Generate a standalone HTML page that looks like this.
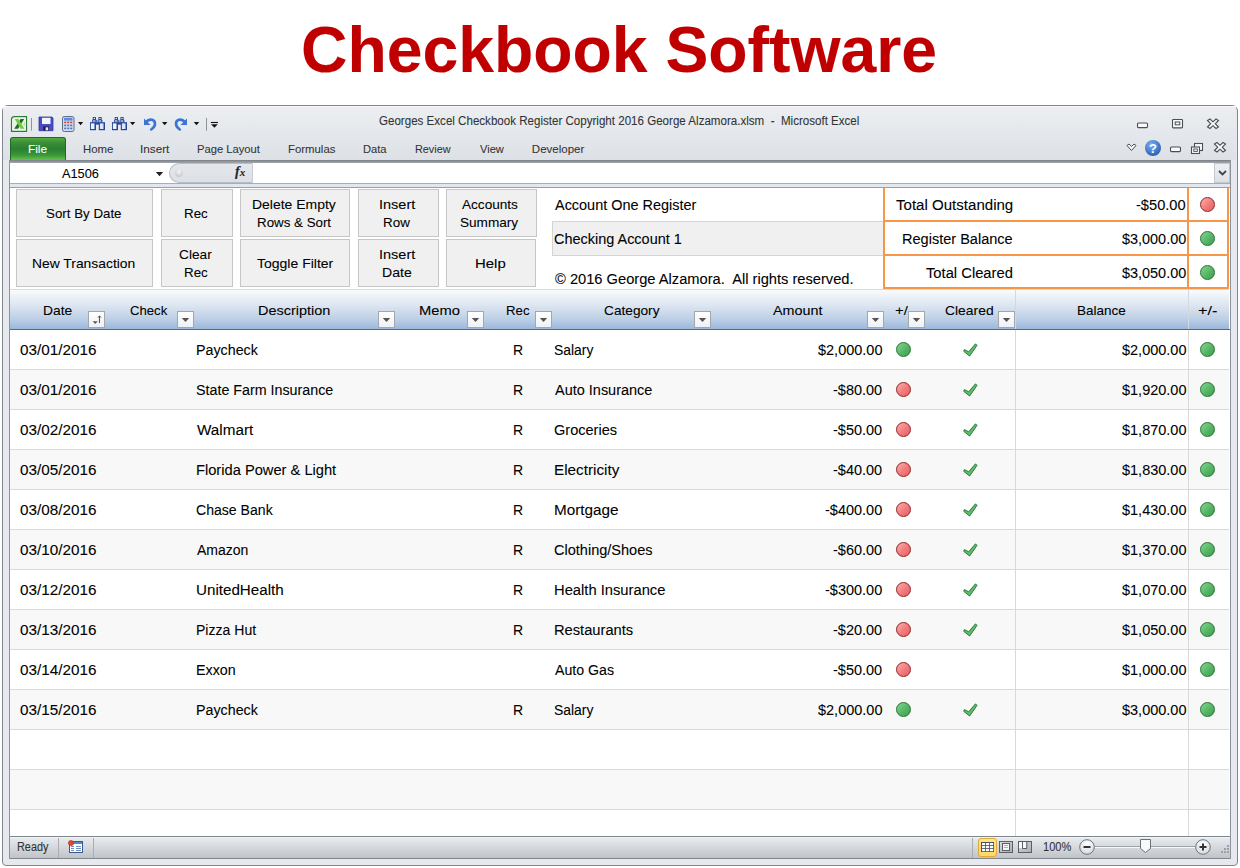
<!DOCTYPE html>
<html><head><meta charset="utf-8"><title>Checkbook Software</title>
<style>
html,body{margin:0;padding:0;background:#fff;font-family:"Liberation Sans",sans-serif;width:1240px;height:868px;overflow:hidden;position:relative;}
.t{position:absolute;white-space:pre;font-family:"Liberation Sans",sans-serif;transform-origin:0 0;-webkit-text-stroke:0.08px currentColor;}
.r{position:absolute;}
</style></head><body>
<svg width="0" height="0" style="position:absolute">
<defs>
<radialGradient id="zg" cx="50%" cy="30%" r="70%"><stop offset="0" stop-color="#ffffff"/><stop offset="1" stop-color="#d6dade"/></radialGradient>
<radialGradient id="hg" cx="40%" cy="30%" r="70%"><stop offset="0" stop-color="#7fb0f0"/><stop offset="1" stop-color="#2a60b8"/></radialGradient>
</defs></svg>
<div class="t" style="left:300.89px;top:17.50px;font-size:64px;line-height:64px;color:#c00000;font-weight:700;transform:scaleX(1.0046);">Checkbook Software</div>
<div class="r" style="left:2px;top:105px;width:1234px;height:759px;border:1px solid #7f868e;border-radius:6px 6px 4px 4px;background:#e6e9ed;"></div>
<div class="r" style="left:3px;top:106px;width:1233px;height:1px;background:#f7f8fa;border-radius:5px 5px 0 0;"></div>
<div class="r" style="left:3px;top:107px;width:1233px;height:53px;background:linear-gradient(#eceef1,#e5e8ec 45%,#dde1e6);"></div>
<div class="t" style="left:379.42px;top:114.60px;font-size:12px;line-height:12px;color:#333;transform:scaleX(0.9642);">Georges Excel Checkbook Register Copyright 2016 George Alzamora.xlsm  -  Microsoft Excel</div>
<div class="r" style="left:10px;top:137px;width:56px;height:23px;background:linear-gradient(#55aa40 0%,#3b9038 20%,#2b7f30 50%,#3a9838 78%,#66c34b 100%);border-radius:3px 3px 0 0;border:1px solid #22672a;border-bottom:none;box-sizing:border-box;"></div>
<div class="t" style="left:28.22px;top:144.25px;font-size:11.5px;line-height:11.5px;color:#fff;transform:scaleX(1.0292);">File</div>
<div class="t" style="left:82.66px;top:144.25px;font-size:11.5px;line-height:11.5px;color:#333;transform:scaleX(0.9897);">Home</div>
<div class="t" style="left:140.12px;top:144.25px;font-size:11.5px;line-height:11.5px;color:#333;transform:scaleX(1.0218);">Insert</div>
<div class="t" style="left:197.28px;top:144.25px;font-size:11.5px;line-height:11.5px;color:#333;transform:scaleX(0.9732);">Page Layout</div>
<div class="t" style="left:287.66px;top:144.25px;font-size:11.5px;line-height:11.5px;color:#333;transform:scaleX(0.9892);">Formulas</div>
<div class="t" style="left:363.08px;top:144.25px;font-size:11.5px;line-height:11.5px;color:#333;transform:scaleX(0.9700);">Data</div>
<div class="t" style="left:415.10px;top:144.25px;font-size:11.5px;line-height:11.5px;color:#333;transform:scaleX(0.9429);">Review</div>
<div class="t" style="left:479.96px;top:144.25px;font-size:11.5px;line-height:11.5px;color:#333;transform:scaleX(0.9634);">View</div>
<div class="t" style="left:531.85px;top:144.25px;font-size:11.5px;line-height:11.5px;color:#333;">Developer</div>
<div class="r" style="left:10px;top:160px;width:1221px;height:3px;background:linear-gradient(#7b8087,#a3a8ae);"></div>
<div class="r" style="left:10px;top:163px;width:1220px;height:20px;background:#fff;"></div>
<div class="r" style="left:10px;top:183px;width:1220px;height:1px;background:#a9aeb4;"></div>
<div class="r" style="left:10px;top:184px;width:1220px;height:3px;background:#e2e7ef;"></div>
<div class="r" style="left:9px;top:187px;width:1222px;height:1px;background:#9aa0a7;"></div>
<div class="t" style="left:62.45px;top:166.75px;font-size:13.5px;line-height:13.5px;color:#000;transform:scaleX(0.9453);">A1506</div>
<svg class="r" style="left:155px;top:171px" width="9" height="6"><path d="M0.8 1h7.4l-3.7 4.2z" fill="#222"/></svg>
<div class="r" style="left:169px;top:163px;width:84px;height:20px;background:linear-gradient(#e4e7eb,#dcdfe4);border:1px solid #b9bec4;border-right:1px solid #c9cdd2;border-radius:10px 0 0 10px;box-sizing:border-box;"></div>
<div class="r" style="left:175px;top:169px;width:8px;height:8px;border-radius:50%;background:radial-gradient(circle at 50% 30%,#f4f4f4,#b9bdc2);"></div>
<div class="t" style="left:235px;top:165px;font-family:'Liberation Serif',serif;font-style:italic;font-weight:700;font-size:14px;line-height:14px;color:#222;">f<span style="font-size:11px">x</span></div>
<div class="r" style="left:1214px;top:163px;width:16px;height:20px;background:linear-gradient(#eef0f3,#dde1e6);border:1px solid #c3c8ce;box-sizing:border-box;"></div>
<svg class="r" style="left:1218px;top:170px" width="9" height="6"><path d="M1 1l3.5 3.5L8 1" stroke="#444" stroke-width="1.8" fill="none"/></svg>
<div class="r" style="left:9px;top:188px;width:1222px;height:649px;background:#fff;border-left:1px solid #8b9299;border-right:1px solid #8b9299;box-sizing:border-box;"></div>
<div class="r" style="left:16px;top:189px;width:137px;height:48px;background:#f0f0f0;border:1px solid #c6c6c6;box-sizing:border-box;"></div>
<div class="r" style="left:161px;top:189px;width:72px;height:48px;background:#f0f0f0;border:1px solid #c6c6c6;box-sizing:border-box;"></div>
<div class="r" style="left:240px;top:189px;width:110px;height:48px;background:#f0f0f0;border:1px solid #c6c6c6;box-sizing:border-box;"></div>
<div class="r" style="left:358px;top:189px;width:81px;height:48px;background:#f0f0f0;border:1px solid #c6c6c6;box-sizing:border-box;"></div>
<div class="r" style="left:446px;top:189px;width:91px;height:48px;background:#f0f0f0;border:1px solid #c6c6c6;box-sizing:border-box;"></div>
<div class="r" style="left:16px;top:239px;width:137px;height:48px;background:#f0f0f0;border:1px solid #c6c6c6;box-sizing:border-box;"></div>
<div class="r" style="left:161px;top:239px;width:72px;height:48px;background:#f0f0f0;border:1px solid #c6c6c6;box-sizing:border-box;"></div>
<div class="r" style="left:240px;top:239px;width:110px;height:48px;background:#f0f0f0;border:1px solid #c6c6c6;box-sizing:border-box;"></div>
<div class="r" style="left:358px;top:239px;width:81px;height:48px;background:#f0f0f0;border:1px solid #c6c6c6;box-sizing:border-box;"></div>
<div class="r" style="left:446px;top:239px;width:90px;height:48px;background:#f0f0f0;border:1px solid #c6c6c6;box-sizing:border-box;"></div>
<div class="t" style="left:46.39px;top:207.30px;font-size:13px;line-height:13px;color:#000;transform:scaleX(1.0248);">Sort By Date</div>
<div class="t" style="left:183.87px;top:207.30px;font-size:13px;line-height:13px;color:#000;transform:scaleX(1.0276);">Rec</div>
<div class="t" style="left:252.02px;top:198.20px;font-size:13px;line-height:13px;color:#000;transform:scaleX(1.0741);">Delete Empty</div>
<div class="t" style="left:257.27px;top:216.00px;font-size:13px;line-height:13px;color:#000;transform:scaleX(1.0254);">Rows &amp; Sort</div>
<div class="t" style="left:379.16px;top:198.20px;font-size:13px;line-height:13px;color:#000;transform:scaleX(1.1154);">Insert</div>
<div class="t" style="left:383.16px;top:216.00px;font-size:13px;line-height:13px;color:#000;transform:scaleX(1.0321);">Row</div>
<div class="t" style="left:462.30px;top:198.20px;font-size:13px;line-height:13px;color:#000;transform:scaleX(1.0453);">Accounts</div>
<div class="t" style="left:460.37px;top:216.00px;font-size:13px;line-height:13px;color:#000;transform:scaleX(1.0455);">Summary</div>
<div class="t" style="left:32.13px;top:257.30px;font-size:13px;line-height:13px;color:#000;transform:scaleX(1.0664);">New Transaction</div>
<div class="t" style="left:179.26px;top:248.00px;font-size:13px;line-height:13px;color:#000;transform:scaleX(1.0532);">Clear</div>
<div class="t" style="left:183.87px;top:265.80px;font-size:13px;line-height:13px;color:#000;transform:scaleX(1.0276);">Rec</div>
<div class="t" style="left:256.68px;top:256.70px;font-size:13px;line-height:13px;color:#000;transform:scaleX(1.0768);">Toggle Filter</div>
<div class="t" style="left:379.16px;top:247.70px;font-size:13px;line-height:13px;color:#000;transform:scaleX(1.1154);">Insert</div>
<div class="t" style="left:382.31px;top:265.80px;font-size:13px;line-height:13px;color:#000;transform:scaleX(1.0814);">Date</div>
<div class="t" style="left:474.74px;top:256.70px;font-size:13px;line-height:13px;color:#000;transform:scaleX(1.1474);">Help</div>
<div class="t" style="left:555.00px;top:198.00px;font-size:14px;line-height:14px;color:#000;transform:scaleX(1.0315);">Account One Register</div>
<div class="r" style="left:552px;top:221px;width:332px;height:35px;background:#f0f0f0;border:1px solid #d4d4d4;border-right:none;box-sizing:border-box;"></div>
<div class="t" style="left:554.28px;top:231.90px;font-size:14px;line-height:14px;color:#000;transform:scaleX(1.0327);">Checking Account 1</div>
<div class="t" style="left:554.79px;top:271.70px;font-size:14px;line-height:14px;color:#000;transform:scaleX(1.0476);">© 2016 George Alzamora.  All rights reserved.</div>
<div class="r" style="left:883px;top:188px;width:346px;height:101px;border:2px solid #f79646;border-top:none;box-sizing:border-box;"></div>
<div class="r" style="left:883px;top:220px;width:346px;height:2px;background:#f79646;"></div>
<div class="r" style="left:883px;top:254px;width:346px;height:2px;background:#f79646;"></div>
<div class="r" style="left:1187px;top:188px;width:2px;height:101px;background:#f79646;"></div>
<div class="t" style="left:895.98px;top:197.80px;font-size:14px;line-height:14px;color:#000;transform:scaleX(1.0761);">Total Outstanding</div>
<div class="t" style="left:902.26px;top:232.00px;font-size:14px;line-height:14px;color:#000;transform:scaleX(1.0381);">Register Balance</div>
<div class="t" style="left:926.38px;top:265.90px;font-size:14px;line-height:14px;color:#000;transform:scaleX(1.0529);">Total Cleared</div>
<div class="t" style="left:1136.37px;top:197.80px;font-size:14px;line-height:14px;color:#000;transform:scaleX(1.0454);">-$50.00</div>
<div class="t" style="left:1121.79px;top:232.00px;font-size:14px;line-height:14px;color:#000;transform:scaleX(1.0309);">$3,000.00</div>
<div class="t" style="left:1121.79px;top:265.90px;font-size:14px;line-height:14px;color:#000;transform:scaleX(1.0309);">$3,050.00</div>
<div class="r" style="left:1200px;top:197px;width:15px;height:15px;border-radius:50%;background:linear-gradient(135deg,#fbb0b0,#f27a7a 55%,#ec5f5f);border:1px solid #8c2424;box-sizing:border-box;"></div>
<div class="r" style="left:1200px;top:231px;width:15px;height:15px;border-radius:50%;background:linear-gradient(135deg,#86d491,#55b766 55%,#3e9f4f);border:1px solid #2a6e33;box-sizing:border-box;"></div>
<div class="r" style="left:1200px;top:265px;width:15px;height:15px;border-radius:50%;background:linear-gradient(135deg,#86d491,#55b766 55%,#3e9f4f);border:1px solid #2a6e33;box-sizing:border-box;"></div>
<div class="r" style="left:10px;top:289px;width:1219px;height:1px;background:#dadada;"></div>
<div class="r" style="left:10px;top:290px;width:1219px;height:39px;background:linear-gradient(#f9fbfd 0%,#d8e2ef 45%,#bccfe6 75%,#9bb8dc 100%);"></div>
<div class="r" style="left:10px;top:329px;width:1221px;height:1px;background:#62676d;"></div>
<div class="r" style="left:1015px;top:290px;width:1px;height:39px;background:#d0d8e2;"></div>
<div class="r" style="left:1188px;top:290px;width:1px;height:39px;background:#d0d8e2;"></div>
<div class="t" style="left:42.53px;top:304.10px;font-size:13px;line-height:13px;color:#000;transform:scaleX(1.0620);">Date</div>
<div class="t" style="left:130.49px;top:304.10px;font-size:13px;line-height:13px;color:#000;transform:scaleX(1.0111);">Check</div>
<div class="t" style="left:257.98px;top:304.10px;font-size:13px;line-height:13px;color:#000;transform:scaleX(1.1125);">Description</div>
<div class="t" style="left:419.15px;top:304.10px;font-size:13px;line-height:13px;color:#000;transform:scaleX(1.1333);">Memo</div>
<div class="t" style="left:506.08px;top:304.10px;font-size:13px;line-height:13px;color:#000;transform:scaleX(1.0184);">Rec</div>
<div class="t" style="left:603.56px;top:304.10px;font-size:13px;line-height:13px;color:#000;transform:scaleX(1.0519);">Category</div>
<div class="t" style="left:773.20px;top:304.10px;font-size:13px;line-height:13px;color:#000;transform:scaleX(1.1029);">Amount</div>
<div class="t" style="left:894.62px;top:304.10px;font-size:13px;line-height:13px;color:#000;transform:scaleX(1.1415);">+/</div>
<div class="t" style="left:945.45px;top:304.10px;font-size:13px;line-height:13px;color:#000;transform:scaleX(1.0682);">Cleared</div>
<div class="t" style="left:1077.16px;top:304.10px;font-size:13px;line-height:13px;color:#000;transform:scaleX(1.0397);">Balance</div>
<div class="t" style="left:1198.05px;top:304.10px;font-size:13px;line-height:13px;color:#000;transform:scaleX(1.2500);">+/-</div>
<div class="r" style="left:88px;top:311px;width:17px;height:17px;background:linear-gradient(#fff,#eef1f5);border:1px solid #a3a7ac;box-sizing:border-box;"></div><svg class="r" style="left:88px;top:311px" width="17" height="17"><path d="M4.7 10.3h5l-2.5 2.8z" fill="#555"/><path d="M11.5 5v7" stroke="#555" stroke-width="1.1"/><path d="M10 6.6l1.5-1.8 1.5 1.8" stroke="#555" stroke-width="1" fill="none"/></svg>
<div class="r" style="left:177px;top:311px;width:17px;height:17px;background:linear-gradient(#fff,#eef1f5);border:1px solid #a3a7ac;box-sizing:border-box;"></div><svg class="r" style="left:177px;top:311px" width="17" height="17"><path d="M4.8 7h7.4l-3.7 4z" fill="#555"/></svg>
<div class="r" style="left:378px;top:311px;width:17px;height:17px;background:linear-gradient(#fff,#eef1f5);border:1px solid #a3a7ac;box-sizing:border-box;"></div><svg class="r" style="left:378px;top:311px" width="17" height="17"><path d="M4.8 7h7.4l-3.7 4z" fill="#555"/></svg>
<div class="r" style="left:467px;top:311px;width:17px;height:17px;background:linear-gradient(#fff,#eef1f5);border:1px solid #a3a7ac;box-sizing:border-box;"></div><svg class="r" style="left:467px;top:311px" width="17" height="17"><path d="M4.8 7h7.4l-3.7 4z" fill="#555"/></svg>
<div class="r" style="left:535px;top:311px;width:17px;height:17px;background:linear-gradient(#fff,#eef1f5);border:1px solid #a3a7ac;box-sizing:border-box;"></div><svg class="r" style="left:535px;top:311px" width="17" height="17"><path d="M4.8 7h7.4l-3.7 4z" fill="#555"/></svg>
<div class="r" style="left:694px;top:311px;width:17px;height:17px;background:linear-gradient(#fff,#eef1f5);border:1px solid #a3a7ac;box-sizing:border-box;"></div><svg class="r" style="left:694px;top:311px" width="17" height="17"><path d="M4.8 7h7.4l-3.7 4z" fill="#555"/></svg>
<div class="r" style="left:867px;top:311px;width:17px;height:17px;background:linear-gradient(#fff,#eef1f5);border:1px solid #a3a7ac;box-sizing:border-box;"></div><svg class="r" style="left:867px;top:311px" width="17" height="17"><path d="M4.8 7h7.4l-3.7 4z" fill="#555"/></svg>
<div class="r" style="left:908px;top:311px;width:17px;height:17px;background:linear-gradient(#fff,#eef1f5);border:1px solid #a3a7ac;box-sizing:border-box;"></div><svg class="r" style="left:908px;top:311px" width="17" height="17"><path d="M4.8 7h7.4l-3.7 4z" fill="#555"/></svg>
<div class="r" style="left:998px;top:311px;width:17px;height:17px;background:linear-gradient(#fff,#eef1f5);border:1px solid #a3a7ac;box-sizing:border-box;"></div><svg class="r" style="left:998px;top:311px" width="17" height="17"><path d="M4.8 7h7.4l-3.7 4z" fill="#555"/></svg>
<div class="r" style="left:10px;top:330px;width:1219px;height:39px;background:#ffffff;"></div>
<div class="r" style="left:10px;top:369px;width:1219px;height:1px;background:#dadada;"></div>
<div class="r" style="left:10px;top:370px;width:1219px;height:39px;background:#f8f8f8;"></div>
<div class="r" style="left:10px;top:409px;width:1219px;height:1px;background:#dadada;"></div>
<div class="r" style="left:10px;top:410px;width:1219px;height:39px;background:#ffffff;"></div>
<div class="r" style="left:10px;top:449px;width:1219px;height:1px;background:#dadada;"></div>
<div class="r" style="left:10px;top:450px;width:1219px;height:39px;background:#f8f8f8;"></div>
<div class="r" style="left:10px;top:489px;width:1219px;height:1px;background:#dadada;"></div>
<div class="r" style="left:10px;top:490px;width:1219px;height:39px;background:#ffffff;"></div>
<div class="r" style="left:10px;top:529px;width:1219px;height:1px;background:#dadada;"></div>
<div class="r" style="left:10px;top:530px;width:1219px;height:39px;background:#f8f8f8;"></div>
<div class="r" style="left:10px;top:569px;width:1219px;height:1px;background:#dadada;"></div>
<div class="r" style="left:10px;top:570px;width:1219px;height:39px;background:#ffffff;"></div>
<div class="r" style="left:10px;top:609px;width:1219px;height:1px;background:#dadada;"></div>
<div class="r" style="left:10px;top:610px;width:1219px;height:39px;background:#f8f8f8;"></div>
<div class="r" style="left:10px;top:649px;width:1219px;height:1px;background:#dadada;"></div>
<div class="r" style="left:10px;top:650px;width:1219px;height:39px;background:#ffffff;"></div>
<div class="r" style="left:10px;top:689px;width:1219px;height:1px;background:#dadada;"></div>
<div class="r" style="left:10px;top:690px;width:1219px;height:39px;background:#f8f8f8;"></div>
<div class="r" style="left:10px;top:729px;width:1219px;height:1px;background:#dadada;"></div>
<div class="r" style="left:10px;top:730px;width:1219px;height:39px;background:#ffffff;"></div>
<div class="r" style="left:10px;top:769px;width:1219px;height:1px;background:#dadada;"></div>
<div class="r" style="left:10px;top:770px;width:1219px;height:39px;background:#f8f8f8;"></div>
<div class="r" style="left:10px;top:809px;width:1219px;height:1px;background:#dadada;"></div>
<div class="r" style="left:10px;top:810px;width:1219px;height:26px;background:#ffffff;"></div>
<div class="r" style="left:1015px;top:330px;width:1px;height:506px;background:#d9d9d9;"></div>
<div class="r" style="left:1188px;top:330px;width:1px;height:506px;background:#d9d9d9;"></div>
<div class="t" style="left:19.65px;top:343.20px;font-size:14px;line-height:14px;color:#000;transform:scaleX(1.0913);">03/01/2016</div>
<div class="t" style="left:195.88px;top:343.20px;font-size:14px;line-height:14px;color:#000;transform:scaleX(1.0185);">Paycheck</div>
<div class="t" style="left:512.90px;top:343.20px;font-size:14px;line-height:14px;color:#000;">R</div>
<div class="t" style="left:554.41px;top:343.20px;font-size:14px;line-height:14px;color:#000;transform:scaleX(0.9923);">Salary</div>
<div class="t" style="left:818.14px;top:343.20px;font-size:14px;line-height:14px;color:#000;transform:scaleX(1.0350);">$2,000.00</div>
<div class="r" style="left:896px;top:342px;width:15px;height:15px;border-radius:50%;background:linear-gradient(135deg,#86d491,#55b766 55%,#3e9f4f);border:1px solid #2a6e33;box-sizing:border-box;"></div>
<svg class="r" style="left:962px;top:342px" width="17" height="16" viewBox="0 0 17 16"><path d="M2.4 7.6L1.7 9.3L7.6 14L15 3.4L13.5 1.8L6.7 9.8Z" fill="#5cbf6e" stroke="#2c7a38" stroke-width="1" stroke-linejoin="round"/></svg>
<div class="t" style="left:1121.54px;top:343.20px;font-size:14px;line-height:14px;color:#000;transform:scaleX(1.0350);">$2,000.00</div>
<div class="r" style="left:1200px;top:342px;width:15px;height:15px;border-radius:50%;background:linear-gradient(135deg,#86d491,#55b766 55%,#3e9f4f);border:1px solid #2a6e33;box-sizing:border-box;"></div>
<div class="t" style="left:19.65px;top:383.20px;font-size:14px;line-height:14px;color:#000;transform:scaleX(1.0913);">03/01/2016</div>
<div class="t" style="left:196.29px;top:383.20px;font-size:14px;line-height:14px;color:#000;transform:scaleX(1.0195);">State Farm Insurance</div>
<div class="t" style="left:512.90px;top:383.20px;font-size:14px;line-height:14px;color:#000;">R</div>
<div class="t" style="left:555.10px;top:383.20px;font-size:14px;line-height:14px;color:#000;transform:scaleX(1.0342);">Auto Insurance</div>
<div class="t" style="left:833.46px;top:383.20px;font-size:14px;line-height:14px;color:#000;transform:scaleX(1.0350);">-$80.00</div>
<div class="r" style="left:896px;top:382px;width:15px;height:15px;border-radius:50%;background:linear-gradient(135deg,#fbb0b0,#f27a7a 55%,#ec5f5f);border:1px solid #8c2424;box-sizing:border-box;"></div>
<svg class="r" style="left:962px;top:382px" width="17" height="16" viewBox="0 0 17 16"><path d="M2.4 7.6L1.7 9.3L7.6 14L15 3.4L13.5 1.8L6.7 9.8Z" fill="#5cbf6e" stroke="#2c7a38" stroke-width="1" stroke-linejoin="round"/></svg>
<div class="t" style="left:1121.54px;top:383.20px;font-size:14px;line-height:14px;color:#000;transform:scaleX(1.0350);">$1,920.00</div>
<div class="r" style="left:1200px;top:382px;width:15px;height:15px;border-radius:50%;background:linear-gradient(135deg,#86d491,#55b766 55%,#3e9f4f);border:1px solid #2a6e33;box-sizing:border-box;"></div>
<div class="t" style="left:19.65px;top:423.20px;font-size:14px;line-height:14px;color:#000;transform:scaleX(1.0913);">03/02/2016</div>
<div class="t" style="left:196.89px;top:423.20px;font-size:14px;line-height:14px;color:#000;transform:scaleX(1.0895);">Walmart</div>
<div class="t" style="left:512.90px;top:423.20px;font-size:14px;line-height:14px;color:#000;">R</div>
<div class="t" style="left:554.37px;top:423.20px;font-size:14px;line-height:14px;color:#000;transform:scaleX(1.0387);">Groceries</div>
<div class="t" style="left:833.46px;top:423.20px;font-size:14px;line-height:14px;color:#000;transform:scaleX(1.0350);">-$50.00</div>
<div class="r" style="left:896px;top:422px;width:15px;height:15px;border-radius:50%;background:linear-gradient(135deg,#fbb0b0,#f27a7a 55%,#ec5f5f);border:1px solid #8c2424;box-sizing:border-box;"></div>
<svg class="r" style="left:962px;top:422px" width="17" height="16" viewBox="0 0 17 16"><path d="M2.4 7.6L1.7 9.3L7.6 14L15 3.4L13.5 1.8L6.7 9.8Z" fill="#5cbf6e" stroke="#2c7a38" stroke-width="1" stroke-linejoin="round"/></svg>
<div class="t" style="left:1121.54px;top:423.20px;font-size:14px;line-height:14px;color:#000;transform:scaleX(1.0350);">$1,870.00</div>
<div class="r" style="left:1200px;top:422px;width:15px;height:15px;border-radius:50%;background:linear-gradient(135deg,#86d491,#55b766 55%,#3e9f4f);border:1px solid #2a6e33;box-sizing:border-box;"></div>
<div class="t" style="left:19.65px;top:463.20px;font-size:14px;line-height:14px;color:#000;transform:scaleX(1.0913);">03/05/2016</div>
<div class="t" style="left:195.85px;top:463.20px;font-size:14px;line-height:14px;color:#000;transform:scaleX(1.0475);">Florida Power &amp; Light</div>
<div class="t" style="left:512.90px;top:463.20px;font-size:14px;line-height:14px;color:#000;">R</div>
<div class="t" style="left:553.90px;top:463.20px;font-size:14px;line-height:14px;color:#000;transform:scaleX(1.0901);">Electricity</div>
<div class="t" style="left:833.46px;top:463.20px;font-size:14px;line-height:14px;color:#000;transform:scaleX(1.0350);">-$40.00</div>
<div class="r" style="left:896px;top:462px;width:15px;height:15px;border-radius:50%;background:linear-gradient(135deg,#fbb0b0,#f27a7a 55%,#ec5f5f);border:1px solid #8c2424;box-sizing:border-box;"></div>
<svg class="r" style="left:962px;top:462px" width="17" height="16" viewBox="0 0 17 16"><path d="M2.4 7.6L1.7 9.3L7.6 14L15 3.4L13.5 1.8L6.7 9.8Z" fill="#5cbf6e" stroke="#2c7a38" stroke-width="1" stroke-linejoin="round"/></svg>
<div class="t" style="left:1121.54px;top:463.20px;font-size:14px;line-height:14px;color:#000;transform:scaleX(1.0350);">$1,830.00</div>
<div class="r" style="left:1200px;top:462px;width:15px;height:15px;border-radius:50%;background:linear-gradient(135deg,#86d491,#55b766 55%,#3e9f4f);border:1px solid #2a6e33;box-sizing:border-box;"></div>
<div class="t" style="left:19.65px;top:503.20px;font-size:14px;line-height:14px;color:#000;transform:scaleX(1.0913);">03/08/2016</div>
<div class="t" style="left:196.30px;top:503.20px;font-size:14px;line-height:14px;color:#000;transform:scaleX(1.0053);">Chase Bank</div>
<div class="t" style="left:512.90px;top:503.20px;font-size:14px;line-height:14px;color:#000;">R</div>
<div class="t" style="left:553.90px;top:503.20px;font-size:14px;line-height:14px;color:#000;transform:scaleX(1.0904);">Mortgage</div>
<div class="t" style="left:825.39px;top:503.20px;font-size:14px;line-height:14px;color:#000;transform:scaleX(1.0350);">-$400.00</div>
<div class="r" style="left:896px;top:502px;width:15px;height:15px;border-radius:50%;background:linear-gradient(135deg,#fbb0b0,#f27a7a 55%,#ec5f5f);border:1px solid #8c2424;box-sizing:border-box;"></div>
<svg class="r" style="left:962px;top:502px" width="17" height="16" viewBox="0 0 17 16"><path d="M2.4 7.6L1.7 9.3L7.6 14L15 3.4L13.5 1.8L6.7 9.8Z" fill="#5cbf6e" stroke="#2c7a38" stroke-width="1" stroke-linejoin="round"/></svg>
<div class="t" style="left:1121.54px;top:503.20px;font-size:14px;line-height:14px;color:#000;transform:scaleX(1.0350);">$1,430.00</div>
<div class="r" style="left:1200px;top:502px;width:15px;height:15px;border-radius:50%;background:linear-gradient(135deg,#86d491,#55b766 55%,#3e9f4f);border:1px solid #2a6e33;box-sizing:border-box;"></div>
<div class="t" style="left:19.65px;top:543.20px;font-size:14px;line-height:14px;color:#000;transform:scaleX(1.0913);">03/10/2016</div>
<div class="t" style="left:197.00px;top:543.20px;font-size:14px;line-height:14px;color:#000;">Amazon</div>
<div class="t" style="left:512.90px;top:543.20px;font-size:14px;line-height:14px;color:#000;">R</div>
<div class="t" style="left:554.37px;top:543.20px;font-size:14px;line-height:14px;color:#000;transform:scaleX(1.0373);">Clothing/Shoes</div>
<div class="t" style="left:833.46px;top:543.20px;font-size:14px;line-height:14px;color:#000;transform:scaleX(1.0350);">-$60.00</div>
<div class="r" style="left:896px;top:542px;width:15px;height:15px;border-radius:50%;background:linear-gradient(135deg,#fbb0b0,#f27a7a 55%,#ec5f5f);border:1px solid #8c2424;box-sizing:border-box;"></div>
<svg class="r" style="left:962px;top:542px" width="17" height="16" viewBox="0 0 17 16"><path d="M2.4 7.6L1.7 9.3L7.6 14L15 3.4L13.5 1.8L6.7 9.8Z" fill="#5cbf6e" stroke="#2c7a38" stroke-width="1" stroke-linejoin="round"/></svg>
<div class="t" style="left:1121.54px;top:543.20px;font-size:14px;line-height:14px;color:#000;transform:scaleX(1.0350);">$1,370.00</div>
<div class="r" style="left:1200px;top:542px;width:15px;height:15px;border-radius:50%;background:linear-gradient(135deg,#86d491,#55b766 55%,#3e9f4f);border:1px solid #2a6e33;box-sizing:border-box;"></div>
<div class="t" style="left:19.65px;top:583.20px;font-size:14px;line-height:14px;color:#000;transform:scaleX(1.0913);">03/12/2016</div>
<div class="t" style="left:195.81px;top:583.20px;font-size:14px;line-height:14px;color:#000;transform:scaleX(1.0835);">UnitedHealth</div>
<div class="t" style="left:512.90px;top:583.20px;font-size:14px;line-height:14px;color:#000;">R</div>
<div class="t" style="left:553.94px;top:583.20px;font-size:14px;line-height:14px;color:#000;transform:scaleX(1.0528);">Health Insurance</div>
<div class="t" style="left:825.39px;top:583.20px;font-size:14px;line-height:14px;color:#000;transform:scaleX(1.0350);">-$300.00</div>
<div class="r" style="left:896px;top:582px;width:15px;height:15px;border-radius:50%;background:linear-gradient(135deg,#fbb0b0,#f27a7a 55%,#ec5f5f);border:1px solid #8c2424;box-sizing:border-box;"></div>
<svg class="r" style="left:962px;top:582px" width="17" height="16" viewBox="0 0 17 16"><path d="M2.4 7.6L1.7 9.3L7.6 14L15 3.4L13.5 1.8L6.7 9.8Z" fill="#5cbf6e" stroke="#2c7a38" stroke-width="1" stroke-linejoin="round"/></svg>
<div class="t" style="left:1121.54px;top:583.20px;font-size:14px;line-height:14px;color:#000;transform:scaleX(1.0350);">$1,070.00</div>
<div class="r" style="left:1200px;top:582px;width:15px;height:15px;border-radius:50%;background:linear-gradient(135deg,#86d491,#55b766 55%,#3e9f4f);border:1px solid #2a6e33;box-sizing:border-box;"></div>
<div class="t" style="left:19.65px;top:623.20px;font-size:14px;line-height:14px;color:#000;transform:scaleX(1.0913);">03/13/2016</div>
<div class="t" style="left:195.90px;top:623.20px;font-size:14px;line-height:14px;color:#000;transform:scaleX(1.0034);">Pizza Hut</div>
<div class="t" style="left:512.90px;top:623.20px;font-size:14px;line-height:14px;color:#000;">R</div>
<div class="t" style="left:553.95px;top:623.20px;font-size:14px;line-height:14px;color:#000;transform:scaleX(1.0487);">Restaurants</div>
<div class="t" style="left:833.46px;top:623.20px;font-size:14px;line-height:14px;color:#000;transform:scaleX(1.0350);">-$20.00</div>
<div class="r" style="left:896px;top:622px;width:15px;height:15px;border-radius:50%;background:linear-gradient(135deg,#fbb0b0,#f27a7a 55%,#ec5f5f);border:1px solid #8c2424;box-sizing:border-box;"></div>
<svg class="r" style="left:962px;top:622px" width="17" height="16" viewBox="0 0 17 16"><path d="M2.4 7.6L1.7 9.3L7.6 14L15 3.4L13.5 1.8L6.7 9.8Z" fill="#5cbf6e" stroke="#2c7a38" stroke-width="1" stroke-linejoin="round"/></svg>
<div class="t" style="left:1121.54px;top:623.20px;font-size:14px;line-height:14px;color:#000;transform:scaleX(1.0350);">$1,050.00</div>
<div class="r" style="left:1200px;top:622px;width:15px;height:15px;border-radius:50%;background:linear-gradient(135deg,#86d491,#55b766 55%,#3e9f4f);border:1px solid #2a6e33;box-sizing:border-box;"></div>
<div class="t" style="left:19.65px;top:663.20px;font-size:14px;line-height:14px;color:#000;transform:scaleX(1.0913);">03/14/2016</div>
<div class="t" style="left:195.88px;top:663.20px;font-size:14px;line-height:14px;color:#000;transform:scaleX(1.0217);">Exxon</div>
<div class="t" style="left:555.10px;top:663.20px;font-size:14px;line-height:14px;color:#000;transform:scaleX(1.0121);">Auto Gas</div>
<div class="t" style="left:833.46px;top:663.20px;font-size:14px;line-height:14px;color:#000;transform:scaleX(1.0350);">-$50.00</div>
<div class="r" style="left:896px;top:662px;width:15px;height:15px;border-radius:50%;background:linear-gradient(135deg,#fbb0b0,#f27a7a 55%,#ec5f5f);border:1px solid #8c2424;box-sizing:border-box;"></div>
<div class="t" style="left:1121.54px;top:663.20px;font-size:14px;line-height:14px;color:#000;transform:scaleX(1.0350);">$1,000.00</div>
<div class="r" style="left:1200px;top:662px;width:15px;height:15px;border-radius:50%;background:linear-gradient(135deg,#86d491,#55b766 55%,#3e9f4f);border:1px solid #2a6e33;box-sizing:border-box;"></div>
<div class="t" style="left:19.65px;top:703.20px;font-size:14px;line-height:14px;color:#000;transform:scaleX(1.0913);">03/15/2016</div>
<div class="t" style="left:195.88px;top:703.20px;font-size:14px;line-height:14px;color:#000;transform:scaleX(1.0185);">Paycheck</div>
<div class="t" style="left:512.90px;top:703.20px;font-size:14px;line-height:14px;color:#000;">R</div>
<div class="t" style="left:554.41px;top:703.20px;font-size:14px;line-height:14px;color:#000;transform:scaleX(0.9923);">Salary</div>
<div class="t" style="left:818.14px;top:703.20px;font-size:14px;line-height:14px;color:#000;transform:scaleX(1.0350);">$2,000.00</div>
<div class="r" style="left:896px;top:702px;width:15px;height:15px;border-radius:50%;background:linear-gradient(135deg,#86d491,#55b766 55%,#3e9f4f);border:1px solid #2a6e33;box-sizing:border-box;"></div>
<svg class="r" style="left:962px;top:702px" width="17" height="16" viewBox="0 0 17 16"><path d="M2.4 7.6L1.7 9.3L7.6 14L15 3.4L13.5 1.8L6.7 9.8Z" fill="#5cbf6e" stroke="#2c7a38" stroke-width="1" stroke-linejoin="round"/></svg>
<div class="t" style="left:1121.54px;top:703.20px;font-size:14px;line-height:14px;color:#000;transform:scaleX(1.0350);">$3,000.00</div>
<div class="r" style="left:1200px;top:702px;width:15px;height:15px;border-radius:50%;background:linear-gradient(135deg,#86d491,#55b766 55%,#3e9f4f);border:1px solid #2a6e33;box-sizing:border-box;"></div>
<div class="r" style="left:10px;top:836px;width:1220px;height:1px;background:#7f858c;"></div>
<div class="r" style="left:10px;top:837px;width:1220px;height:21px;background:linear-gradient(#f6f8fa 0,#e6e9ec 8%,#d3d6da 55%,#c0c4c9 100%);"></div>
<div class="r" style="left:10px;top:858px;width:1220px;height:1px;background:#80868d;"></div>
<div class="t" style="left:17.49px;top:840.80px;font-size:12px;line-height:12px;color:#333;transform:scaleX(0.9050);">Ready</div>
<div class="r" style="left:58px;top:838px;width:1px;height:20px;background:#a9aeb4;"></div>
<div class="r" style="left:93px;top:838px;width:1px;height:20px;background:#a9aeb4;"></div>
<div class="r" style="left:972px;top:838px;width:1px;height:20px;background:#a9aeb4;"></div>
<div class="r" style="left:9px;top:160px;width:1px;height:699px;background:#8b9299;"></div>
<div class="r" style="left:1230px;top:160px;width:1px;height:699px;background:#8b9299;"></div>
<svg class="r" style="left:67px;top:839px" width="17" height="15" viewBox="0 0 17 15">
<rect x="2.5" y="2.5" width="13" height="11" fill="#fff" stroke="#3a5a8c"/>
<rect x="3" y="3" width="12" height="2" fill="#5b86c8"/>
<path d="M4 7.5h3M9 7.5h5M4 9.5h3M9 9.5h5M4 11.5h3M9 11.5h5" stroke="#6d8fc4" stroke-width="1"/>
<circle cx="4" cy="4" r="2.6" fill="#e0472c" stroke="#b83218" stroke-width=".6"/>
</svg>
<svg class="r" style="left:977px;top:837px" width="58" height="22" viewBox="977 837 58 22">
<defs><linearGradient id="yb" x1="0" y1="0" x2="0" y2="1"><stop offset="0" stop-color="#fde98f"/><stop offset="1" stop-color="#fbd964"/></linearGradient>
<linearGradient id="gb" x1="0" y1="0" x2="1" y2="1"><stop offset="0" stop-color="#d9dce0"/><stop offset="1" stop-color="#a9aeb5"/></linearGradient></defs>
<rect x="978.5" y="838.5" width="18" height="18" rx="2.5" fill="url(#yb)" stroke="#e0a93a"/>
<rect x="981" y="842" width="13" height="10" fill="#4b505a"/>
<g fill="#fafafa"><rect x="982" y="843" width="3.2" height="2.2"/><rect x="986" y="843" width="3.2" height="2.2"/><rect x="990" y="843" width="3.2" height="2.2"/>
<rect x="982" y="846" width="3.2" height="2.2"/><rect x="986" y="846" width="3.2" height="2.2"/><rect x="990" y="846" width="3.2" height="2.2"/>
<rect x="982" y="849" width="3.2" height="2.2"/><rect x="986" y="849" width="3.2" height="2.2"/><rect x="990" y="849" width="3.2" height="2.2"/></g>
<rect x="999.5" y="841.5" width="13" height="11" fill="url(#gb)" stroke="#5a5f66"/>
<rect x="1002.5" y="843.5" width="7" height="7" fill="#f7f7f7" stroke="#5a5f66"/>
<path d="M1004 845.5h4M1004 847.5h4" stroke="#9aa0a6" stroke-width=".8"/>
<rect x="1018.5" y="841.5" width="13" height="11" fill="url(#gb)" stroke="#5a5f66"/>
<rect x="1019" y="842" width="3" height="6" fill="#fafafa"/>
<rect x="1023" y="842" width="3.3" height="6" fill="#fafafa"/>
<path d="M1022.5 842v6.5h4.3v-6.5" stroke="#5a5f66" stroke-width="1" fill="none"/>
</svg>
<div class="t" style="left:1042.67px;top:841.00px;font-size:12px;line-height:12px;color:#333;transform:scaleX(0.9218);">100%</div>
<div class="r" style="left:1095px;top:846px;width:100px;height:1px;background:#9ea3a9;"></div>
<div class="r" style="left:1095px;top:847px;width:100px;height:1px;background:#f6f7f8;"></div>
<svg class="r" style="left:1079px;top:839px" width="16" height="16" viewBox="0 0 16 16">
<circle cx="8" cy="8" r="7.3" fill="url(#zg)" stroke="#6f757c" stroke-width="1"/>
<path d="M4.5 8h7" stroke="#333" stroke-width="2"/></svg>
<svg class="r" style="left:1195px;top:839px" width="16" height="16" viewBox="0 0 16 16">
<circle cx="8" cy="8" r="7.3" fill="url(#zg)" stroke="#6f757c" stroke-width="1"/>
<path d="M4.5 8h7" stroke="#333" stroke-width="2"/><path d="M8 4.5v7" stroke="#333" stroke-width="2"/></svg>
<svg class="r" style="left:1140px;top:839px" width="11" height="14" viewBox="0 0 11 14">
<path d="M0.5 0.5h10v9l-5 4l-5-4z" fill="#f8f8f8" stroke="#6b7178"/>
</svg>
<svg class="r" style="left:1219px;top:845px" width="11" height="11" viewBox="0 0 11 11">
<g fill="#9aa0a6"><rect x="8" y="0" width="2" height="2"/><rect x="5" y="3" width="2" height="2"/><rect x="8" y="3" width="2" height="2"/>
<rect x="2" y="6" width="2" height="2"/><rect x="5" y="6" width="2" height="2"/><rect x="8" y="6" width="2" height="2"/></g>
</svg>
<svg class="r" style="left:1130px;top:115px" width="100" height="18" viewBox="0 0 100 18">
<rect x="7.5" y="8" width="10" height="4.6" rx="1" fill="#f8f9fa" stroke="#4a4f55" stroke-width="1.1"/>
<rect x="42.5" y="4.5" width="10" height="8.4" rx="0.8" fill="#f8f9fa" stroke="#4a4f55" stroke-width="1.1"/>
<rect x="45.2" y="7" width="4.6" height="2.8" fill="none" stroke="#4a4f55" stroke-width="1"/>
<path d="M77.5 5.5l2.5-1.5 3 2.8 3-2.8 2.5 1.5-3.2 3.2 3.2 3.3-2.5 1.5-3-2.8-3 2.8-2.5-1.5 3.2-3.3z" fill="#f8f9fa" stroke="#4a4f55" stroke-width="1.1"/>
</svg>
<svg class="r" style="left:1125px;top:138px" width="105" height="20" viewBox="0 0 105 20">
<path d="M2 7.5l2-1.5 2.5 2.5 2.5-2.5 2 1.5-4.5 5z" fill="#fafafa" stroke="#4a4f55" stroke-width="1"/>
<circle cx="28" cy="10" r="8" fill="url(#hg)"/>
<text x="28" y="14.6" text-anchor="middle" font-family="Liberation Sans" font-weight="700" font-size="13" fill="#fff">?</text>
<rect x="45.5" y="9" width="10" height="4.6" rx="1" fill="#f8f9fa" stroke="#4a4f55" stroke-width="1.1"/>
<rect x="69.5" y="5.5" width="8" height="7" fill="#f8f9fa" stroke="#4a4f55" stroke-width="1.1"/>
<rect x="66.5" y="9" width="8" height="6.5" fill="#f8f9fa" stroke="#4a4f55" stroke-width="1.1"/>
<rect x="68.8" y="11" width="3.5" height="2.4" fill="none" stroke="#4a4f55" stroke-width="0.9"/>
<path d="M89.5 6l2.5-1.5 3 2.8 3-2.8 2.5 1.5-3.2 3.2 3.2 3.3-2.5 1.5-3-2.8-3 2.8-2.5-1.5 3.2-3.3z" fill="#f8f9fa" stroke="#4a4f55" stroke-width="1.1"/>
</svg>
<svg class="r" style="left:0px;top:110px" width="230" height="26" viewBox="0 110 230 26">
<defs>
<linearGradient id="bar" x1="0" y1="0" x2="1" y2="0"><stop offset="0" stop-color="#ffffff"/><stop offset="1" stop-color="#3656b0"/></linearGradient>
</defs>
<path d="M14.5 116.6h12v14.8h-15v-11.8q0-3 3-3z" fill="#fafdf8" stroke="#2a7d35" stroke-width="1.2"/>
<rect x="13.2" y="118.2" width="11.6" height="11.6" fill="#e4f3de"/>
<path d="M24.2 119h-3.6l-6.4 9.8h3.8z" fill="#1f6a2e"/>
<path d="M14.8 119h3.6l6 9.8h-3.8z" fill="#78c646"/>
<path d="M24.8 122v4.5l-1.5-2.2z" fill="#a8dc98"/>
<path d="M31.5 118v12.7" stroke="#8e949a" stroke-width="1"/>
<path d="M39 117h13l1 1v12.7h-14z" fill="#4b4cc4"/>
<path d="M39 117h13l1 1v12.7h-14z" fill="none" stroke="#3535a0" stroke-width="0.8"/>
<rect x="42" y="117.8" width="8.5" height="6.2" fill="#f2f4fa"/>
<rect x="43.3" y="126.4" width="5.6" height="4.1" fill="#1a1a40"/>
<rect x="45.6" y="127.3" width="2.6" height="3" fill="#e8e8e8"/>
<rect x="62.5" y="116.5" width="11.5" height="15" rx="1.8" fill="#d3dbe8" stroke="#5f6f8a" stroke-width="1"/>
<rect x="64" y="117.8" width="8.5" height="2.8" fill="#5d8ad8"/>
<g fill="#d83a3a"><rect x="64.2" y="121.6" width="2" height="1.6"/><rect x="67.2" y="121.6" width="2" height="1.6"/><rect x="70.2" y="121.6" width="2" height="1.6"/></g>
<g fill="#4a72c8"><rect x="64.2" y="124.6" width="2" height="1.6"/><rect x="67.2" y="124.6" width="2" height="1.6"/><rect x="70.2" y="124.6" width="2" height="1.6"/><rect x="64.2" y="127.6" width="2" height="1.6"/><rect x="67.2" y="127.6" width="2" height="1.6"/><rect x="70.2" y="127.6" width="2" height="1.6"/></g>
<path d="M78 122h5.2l-2.6 3.2z" fill="#111"/>
<g>
<rect x="92.7" y="117" width="3.3" height="3.2" fill="#2a4a9e"/>
<rect x="98.4" y="117" width="3.3" height="3.2" fill="#2a4a9e"/>
<rect x="92" y="119.8" width="4.8" height="2.6" fill="#2a4a9e"/>
<rect x="97.6" y="119.8" width="4.8" height="2.6" fill="#2a4a9e"/>
<rect x="90" y="122.2" width="6" height="8" fill="#23449a"/>
<rect x="98.8" y="122.2" width="6.2" height="8" fill="#23449a"/>
<rect x="95.5" y="122.2" width="3.5" height="2.4" fill="#23449a"/>
<rect x="90.9" y="123.4" width="3.6" height="5.6" fill="#eef2fb"/>
<rect x="99.9" y="123.4" width="3.6" height="5.6" fill="#dfe6f7"/>
<rect x="92.8" y="120.4" width="2.6" height="1.2" fill="#dfe6f7"/>
<rect x="98.6" y="120.4" width="2.6" height="1.2" fill="#dfe6f7"/>
<circle cx="94.3" cy="118.4" r="0.7" fill="#fff"/><circle cx="100" cy="118.4" r="0.7" fill="#fff"/>
</g>
<g transform="translate(22 0)">
<rect x="92.7" y="117" width="3.3" height="3.2" fill="#2a4a9e"/>
<rect x="98.4" y="117" width="3.3" height="3.2" fill="#2a4a9e"/>
<rect x="92" y="119.8" width="4.8" height="2.6" fill="#2a4a9e"/>
<rect x="97.6" y="119.8" width="4.8" height="2.6" fill="#2a4a9e"/>
<rect x="90" y="122.2" width="6" height="8" fill="#23449a"/>
<rect x="98.8" y="122.2" width="6.2" height="8" fill="#23449a"/>
<rect x="95.5" y="122.2" width="3.5" height="2.4" fill="#23449a"/>
<rect x="90.9" y="123.4" width="3.6" height="5.6" fill="#eef2fb"/>
<rect x="99.9" y="123.4" width="3.6" height="5.6" fill="#dfe6f7"/>
<rect x="92.8" y="120.4" width="2.6" height="1.2" fill="#dfe6f7"/>
<rect x="98.6" y="120.4" width="2.6" height="1.2" fill="#dfe6f7"/>
<circle cx="94.3" cy="118.4" r="0.7" fill="#fff"/><circle cx="100" cy="118.4" r="0.7" fill="#fff"/>
</g>
<path d="M130 122h5.2l-2.6 3.2z" fill="#111"/>
<path d="M146.5 121.5c3.5-3.2 8.5-2.2 8.5 2.2c0 2.6-2 4.6-3.8 5.8" stroke="#3a74d6" stroke-width="2.6" fill="none" stroke-linecap="round"/>
<path d="M144 118.5v6.5h6.5z" fill="#3a74d6"/>
<path d="M162 122h5.4l-2.7 3.2z" fill="#111"/>
<path d="M184.5 121.5c-3.5-3.2-8.5-2.2-8.5 2.2c0 2.6 2 4.6 3.8 5.8" stroke="#3a74d6" stroke-width="2.6" fill="none" stroke-linecap="round"/>
<path d="M187 118.5v6.5h-6.5z" fill="#3a74d6"/>
<path d="M193.8 122h5.4l-2.7 3.2z" fill="#111"/>
<path d="M206.5 118v12.7" stroke="#8e949a" stroke-width="1"/>
<path d="M210.8 122.5h7.2" stroke="#111" stroke-width="1.1"/>
<path d="M211 124.2h6.8l-3.4 3.6z" fill="#111"/>
</svg>
</body></html>
